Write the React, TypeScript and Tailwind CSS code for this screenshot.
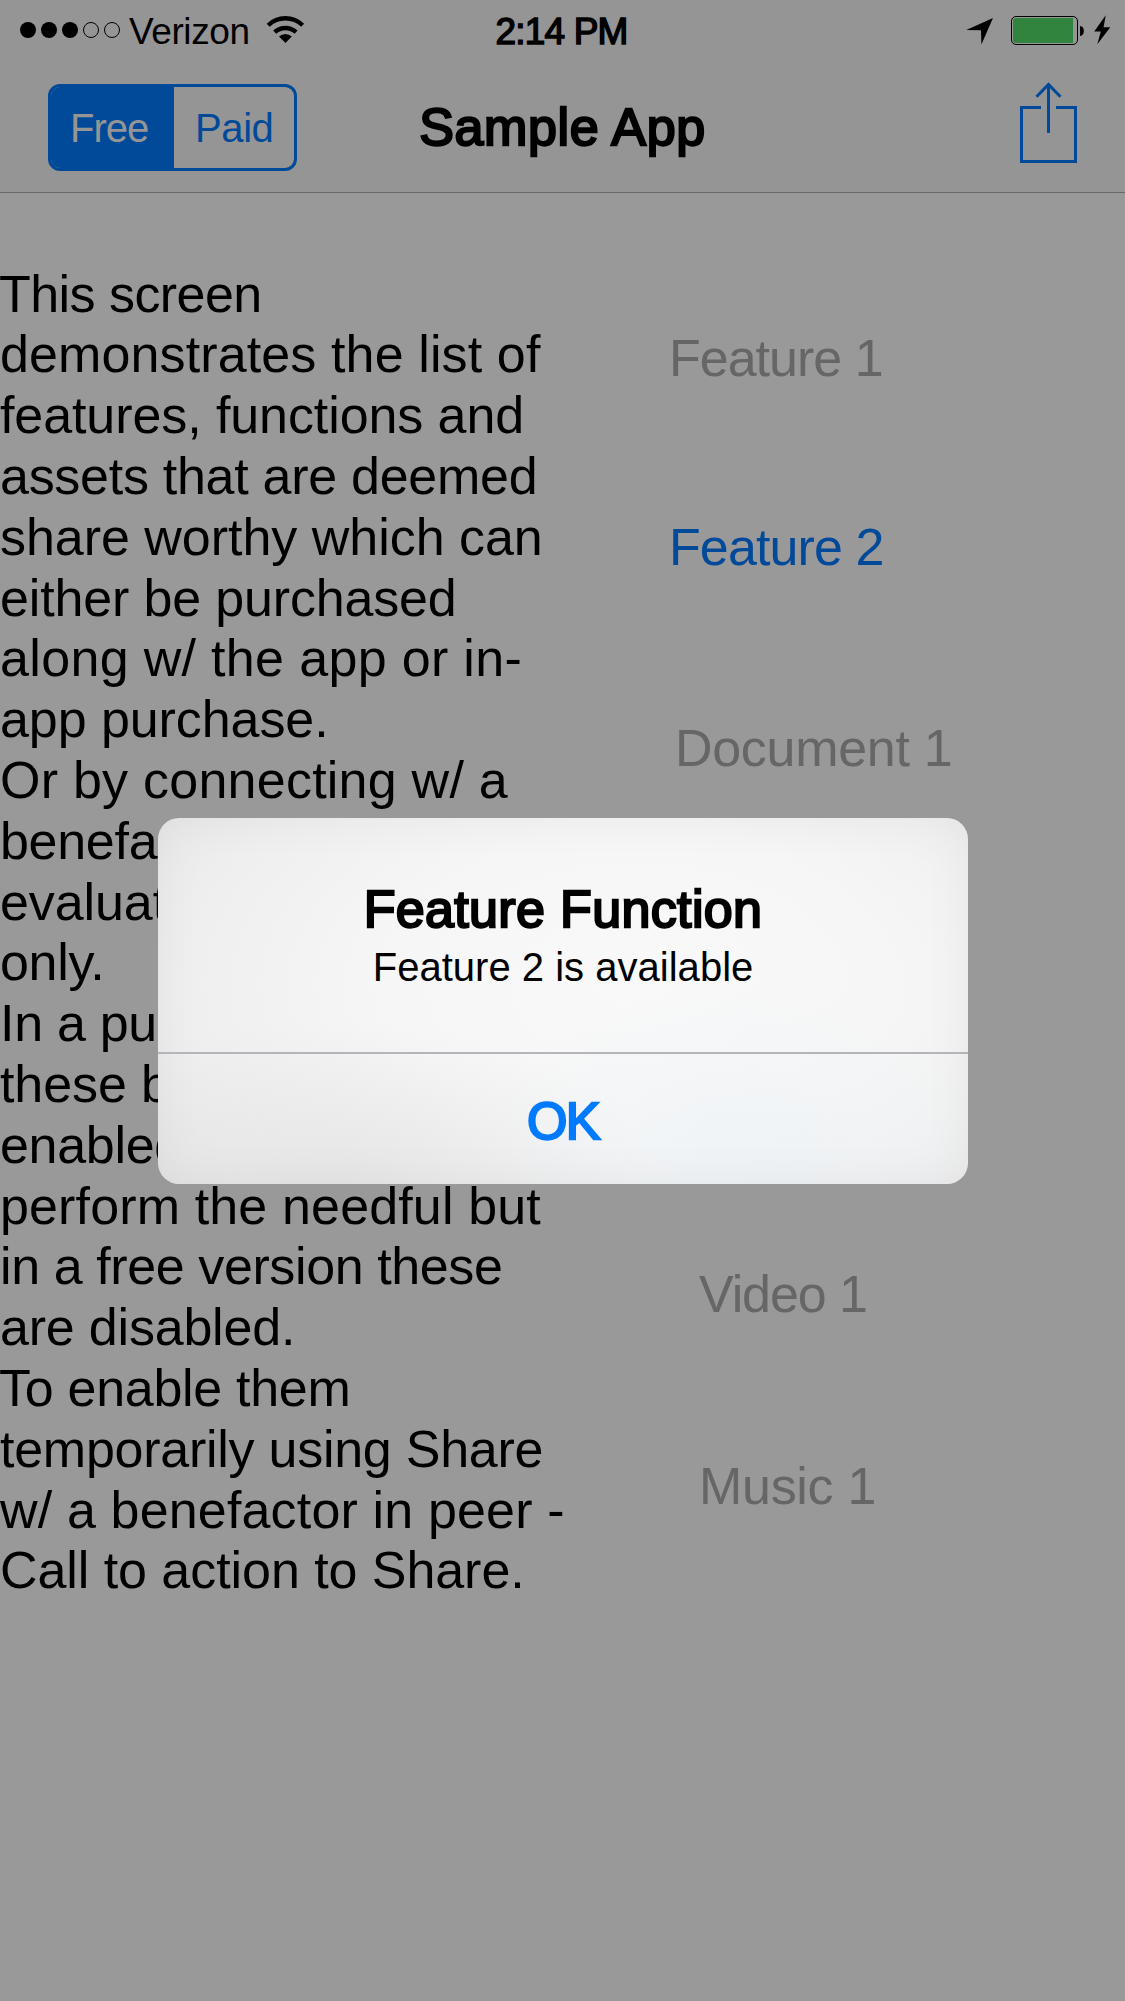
import React from "react";

const lines: { text: string; cls: string }[] = [
  { text: "This screen", cls: "tracking-[-0.55px] -ml-px" },
  { text: "demonstrates the list of", cls: "tracking-[0.12px]" },
  { text: "features, functions and", cls: "tracking-[-0.09px]" },
  { text: "assets that are deemed", cls: "tracking-[-0.28px]" },
  { text: "share worthy which can", cls: "tracking-[-0.03px]" },
  { text: "either be purchased", cls: "tracking-[-0.16px]" },
  { text: "along w/ the app or in-", cls: "tracking-[0.33px]" },
  { text: "app purchase.", cls: "tracking-[-0.08px]" },
  { text: "Or by connecting w/ a", cls: "tracking-[0.24px]" },
  { text: "benefactor for", cls: "tracking-[-0.3px]" },
  { text: "evaluation", cls: "tracking-[-0.1px]" },
  { text: "only.", cls: "tracking-[-0.3px]" },
  { text: "In a purchased", cls: "tracking-[-0.3px]" },
  { text: "these buttons are", cls: "tracking-[-0.1px]" },
  { text: "enabled and", cls: "tracking-[-0.3px]" },
  { text: "perform the needful but", cls: "tracking-[0.14px]" },
  { text: "in a free version these", cls: "tracking-[-0.4px]" },
  { text: "are disabled.", cls: "tracking-[-0.2px]" },
  { text: "To enable them", cls: "tracking-[-0.29px] -ml-px" },
  { text: "temporarily using Share", cls: "tracking-[-0.26px]" },
  { text: "w/ a benefactor in peer -", cls: "tracking-[0.16px]" },
  { text: "Call to action to Share.", cls: "tracking-[-0.06px]" },
];

const features: { label: string; cls: string }[] = [
  { label: "Feature 1", cls: "mt-[135px] ml-[69px] tracking-[-1px] text-[#666]" },
  { label: "Feature 2", cls: "mt-[129px] ml-[69px] tracking-[-0.9px] text-[#004a99]" },
  { label: "Document 1", cls: "mt-[141px] ml-[75px] tracking-[-0.3px] text-[#666]" },
  { label: "Video 1", cls: "mt-[486px] ml-[99px] tracking-[-1.1px] text-[#666]" },
  { label: "Music 1", cls: "mt-[132px] ml-[99px] tracking-[-0.3px] text-[#666]" },
];

function StatusBar() {
  return (
    <div className="grid h-[62px] grid-cols-3 items-center">
      <div className="flex items-center">
        <svg width="129" height="62" viewBox="0 0 129 62">
          <circle cx="28" cy="30" r="8" />
          <circle cx="49" cy="30" r="8" />
          <circle cx="70" cy="30" r="8" />
          <circle cx="91" cy="30" r="7.5" fill="none" stroke="#000" />
          <circle cx="112" cy="30" r="7.5" fill="none" stroke="#000" />
        </svg>
        <span className="w-[131px] pt-0.5 text-[37px] leading-[60px] tracking-[-0.4px]">Verizon</span>
        <svg width="50" height="62" viewBox="260 0 50 62" fill="none" stroke="#000" strokeWidth="4.4">
          <path d="M268.2 25.2A24.6 24.6 0 0 1 302.6 25.2" />
          <path d="M274.7 32.2A15.6 15.6 0 0 1 296.1 32.2" />
          <path d="M285.4 43L279 36.6A9.2 9.2 0 0 1 291.8 36.6Z" fill="#000" stroke="none" />
        </svg>
      </div>
      <span className="pt-0.5 pr-0.5 text-center text-[37px] leading-[60px] tracking-[-0.8px] [-webkit-text-stroke:1.5px_black]">2:14 PM</span>
      <svg className="justify-self-end" width="175" height="62" viewBox="950 0 175 62">
        <path d="M993 18L966.3 30L981 30.3L981.4 44.4Z" />
        <rect x="1011.5" y="16.5" width="66" height="28" rx="4.5" fill="none" stroke="#000" />
        <path d="M1016 18H1073V43H1016Q1013 43 1013 40V21Q1013 18 1016 18Z" fill="#31843d" />
        <path d="M1080 26C1085.2 26 1085.2 36 1080 36Z" />
        <path d="M1105.7 15.3L1094.2 31.5H1100.8L1097.3 44.3L1110.3 27.3H1103.6Z" />
      </svg>
    </div>
  );
}

function NavBar() {
  return (
    <div className="grid h-[130px] grid-cols-3">
      <div className="mt-[22px] ml-12 flex h-[87px] w-[249px] overflow-hidden rounded-[12px] border-[3px] border-[#004a99] text-[40px] leading-[82px]">
        <span className="w-[123px] bg-[#004a99] pl-[19px] tracking-[-1px] text-[#959595]">Free</span>
        <span className="flex-1 pl-[21px] tracking-[-0.4px] text-[#004a99]">Paid</span>
      </div>
      <h1 className="text-center text-[52px] leading-[131px] tracking-[0.6px] whitespace-nowrap [-webkit-text-stroke:2.3px_black]">Sample App</h1>
      <svg className="justify-self-end" width="125" height="130" viewBox="1000 62 125 130" fill="none" stroke="#004a99" strokeWidth="3">
        <path d="M1041 107.5H1021.5V161.5H1075.5V107.5H1056" />
        <path d="M1048.5 133V84.5M1036.5 96.8L1048.5 84.5L1060.5 96.8" />
      </svg>
    </div>
  );
}

function Alert() {
  return (
    <div className="absolute top-[818px] left-[158px] flex h-[366px] w-[810px] flex-col overflow-hidden rounded-[21px] bg-[radial-gradient(ellipse_260px_170px_at_580px_330px,rgba(234,242,248,0.5),transparent),radial-gradient(ellipse_330px_160px_at_180px_366px,rgba(226,226,226,0.7),transparent),radial-gradient(ellipse_560px_330px_at_480px_170px,#f9f9f9_0%,#f6f6f6_45%,#efefef_80%,#e9e9e9_100%)] text-center shadow-[inset_0_0_50px_rgba(0,0,0,0.05)]">
      <div className="h-[234px] pt-[60px]">
        <h2 className="text-[52px] leading-[62px] tracking-[0.35px] [-webkit-text-stroke:2.3px_black]">Feature Function</h2>
        <p className="text-[40px] leading-[54px] tracking-[0.02px]">Feature 2 is available</p>
      </div>
      <button className="h-[132px] border-t-2 border-[#b4b4ba] text-[52px] leading-[135px] tracking-[-1.5px] text-[#007aff] [-webkit-text-stroke:2.3px_#007aff]">OK</button>
    </div>
  );
}

export default function App() {
  return (
    <div className="relative h-[2001px] w-[1125px] overflow-hidden bg-[#999] font-['Liberation_Sans',Arial,sans-serif] text-black">
      <header className="h-[193px] border-b border-[#6b6b6b] bg-[#959595]">
        <StatusBar />
        <NavBar />
      </header>
      <main className="flex">
        <div className="w-[600px] pt-[70.6px] text-[52px] leading-[60.8px] whitespace-nowrap">
          {lines.map((l) => (
            <p key={l.text} className={l.cls}>{l.text}</p>
          ))}
        </div>
        <div className="flex flex-1 flex-col items-start text-[52px] leading-[60px]">
          {features.map((f) => (
            <button key={f.label} className={f.cls}>{f.label}</button>
          ))}
        </div>
      </main>
      <Alert />
    </div>
  );
}
